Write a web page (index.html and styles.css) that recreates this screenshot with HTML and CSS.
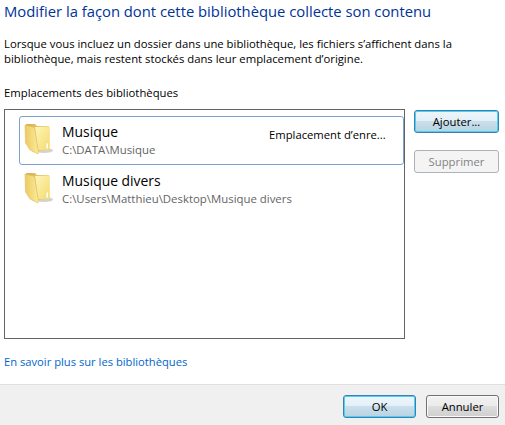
FILE: index.html
```html
<!DOCTYPE html>
<html lang="fr">
<head>
<meta charset="utf-8">
<title>Emplacements</title>
<link rel="stylesheet" href="styles.css">
</head>
<body>
<svg class="defs" width="0" height="0" aria-hidden="true">
  <defs>
    <linearGradient id="back" x1="0" y1="0" x2="1" y2="0"><stop offset="0" stop-color="#d2ae4e"/><stop offset="1" stop-color="#f4dc84"/></linearGradient>
    <linearGradient id="front" x1="0" y1="0" x2="1" y2="1"><stop offset="0" stop-color="#fff7b8"/><stop offset="1" stop-color="#f3d970"/></linearGradient>
    <linearGradient id="left" x1="0" y1="0" x2="1" y2="0"><stop offset="0" stop-color="#ecca62"/><stop offset="1" stop-color="#fbeb9c"/></linearGradient>
    <symbol id="folder" viewBox="0 0 32 32">
      <ellipse cx="21" cy="27.500" rx="9" ry="2.600" fill="#b4b4b4" opacity=".6"/>
      <path d="M3 1h9l2 2h12l.5 1V27l-17 1.500z" fill="url(#back)"/>
      <path d="M12 4h14.500v23H15z" fill="url(#front)"/>
      <path d="M2 2l9.500 2.500 4 25-.5 1.500L7 27 2.500 20z" fill="url(#left)" stroke="#dfbe5e" stroke-width=".6"/>
      <path d="M23.500 20.500h1.500v5h-1.500z" fill="#fff"/>
    </symbol>
  </defs>
</svg>
<main class="content">
  <h1 class="title">Modifier la façon dont cette bibliothèque collecte son contenu</h1>
  <p class="intro">Lorsque vous incluez un dossier dans une bibliothèque, les fichiers s’affichent dans la<br>bibliothèque, mais restent stockés dans leur emplacement d’origine.</p>
  <h2 class="label">Emplacements des bibliothèques</h2>
  <div class="panel">
    <ul class="list">
      <li class="item selected">
        <svg class="folder"><use href="#folder"/></svg>
        <div class="names">
          <div class="name">Musique</div>
          <div class="path">C:\DATA\Musique</div>
        </div>
        <div class="status">Emplacement d’enre...</div>
      </li>
      <li class="item">
        <svg class="folder"><use href="#folder"/></svg>
        <div class="names">
          <div class="name">Musique divers</div>
          <div class="path">C:\Users\Matthieu\Desktop\Musique divers</div>
        </div>
      </li>
    </ul>
    <div class="side">
      <button class="btn focus">Ajouter...</button>
      <button class="btn disabled" disabled>Supprimer</button>
    </div>
  </div>
  <a class="link" href="#">En savoir plus sur les bibliothèques</a>
</main>
<footer class="footer">
  <button class="btn focus action">OK</button>
  <button class="btn action">Annuler</button>
</footer>
</body>
</html>
```
FILE: styles.css
```css
* { box-sizing: border-box; }
html, body { margin: 0; padding: 0; }
body {
  width: 505px;
  height: 425px;
  overflow: hidden;
  background: #fff;
  color: #000;
  font-family: "Open Sans", "Noto Sans", sans-serif;
  font-size: 11.300px;
  display: flex;
  flex-direction: column;
}
.defs { position: absolute; }
.content { height: 384px; padding: 0 0 0 4px; }
.title {
  margin: 0;
  height: 36px;
  font-size: 14.800px;
  line-height: 22px;
  font-weight: 400;
  color: #003399;
}
.intro { margin: 0; line-height: 15px; height: 49px; }
.label { margin: 0; height: 24px; font-size: 11.300px; font-weight: 400; line-height: 15px; }
.panel { display: flex; align-items: flex-start; }
.list {
  list-style: none;
  margin: 0;
  padding: 6px 0 0 14px;
  width: 401px;
  height: 230px;
  border: 1px solid #646464;
}
.item {
  height: 49px;
  width: 385px;
  display: flex;
  border: 1px solid transparent;
  border-radius: 3px;
  padding: 0 0 0 3px;
}
.selected { border-color: #7da2ce; }
.folder { width: 32px; height: 32px; margin-top: 6px; flex: none; }
.names { margin-left: 7px; width: 207px; flex: none; }
.name { font-size: 13.900px; line-height: 19px; margin-top: 5px; }
.path { color: #646464; font-size: 11.400px; line-height: 15px; margin-top: 1px; white-space: nowrap; }
.status { font-size: 11.250px; line-height: 15px; margin-top: 10px; white-space: nowrap; }
.side { margin: 1px 0 0 9px; display: flex; flex-direction: column; gap: 17px; }
.btn {
  width: 85px;
  height: 23px;
  padding: 0;
  border: 1px solid #707070;
  border-radius: 3px;
  font: inherit;
  font-size: 11.300px;
  line-height: 19px;
  color: #000;
  background: linear-gradient(#f2f2f2 0, #ebebeb 48%, #dddddd 50%, #cfcfcf 100%);
  box-shadow: inset 0 0 0 1px #fbfbfb;
}
.focus {
  border-color: #3c7fb1;
  background: linear-gradient(#eef6fb 0, #e3eff7 48%, #c9dfec 50%, #b9d3e2 100%);
  box-shadow: inset 0 0 0 1px #4cd0f3;
}
.disabled {
  border-color: #adb2b5;
  background: #f4f4f4;
  color: #838383;
  box-shadow: none;
}
.link {
  display: block;
  margin-top: 15px;
  line-height: 15px;
  font-size: 11.200px;
  color: #0066cc;
  text-decoration: none;
}
.footer {
  height: 41px;
  background: #f0f0f0;
  border-top: 1px solid #dfdfdf;
  padding: 10px 6px 0 0;
  display: flex;
  justify-content: flex-end;
  gap: 10px;
}
.action { width: 73px; }
```
